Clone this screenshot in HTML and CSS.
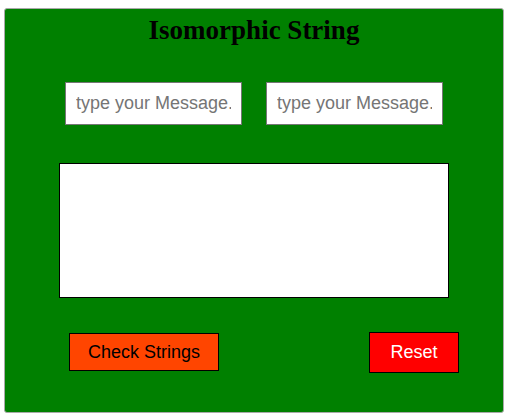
FILE: index.html
```html
<!DOCTYPE html>
<html>
<head>
<meta charset="utf-8">
<link rel="stylesheet" href="styles.css">
</head>
<body>
<div class="box">
  <h1 class="title">Isomorphic String</h1>
  <div class="inputs">
    <input class="field" type="text" placeholder="type your Message.">
    <input class="field" type="text" placeholder="type your Message.">
  </div>
  <div class="output"></div>
  <div class="buttons">
    <button class="btn check">Check Strings</button>
    <button class="btn reset">Reset</button>
  </div>
</div>
</body>
</html>
```
FILE: styles.css
```css
body {
  margin: 8px 0 0 4px;
  font-family: "Liberation Serif", serif;
  background: #fff;
}
.box {
  box-sizing: border-box;
  width: 500px;
  height: 405px;
  background: #008000;
  border: 1px solid #a9a9a9;
  border-radius: 3px;
  display: flex;
  flex-direction: column;
  align-items: center;
}
.title {
  margin: 6px 0 0 0;
  font-size: 27px;
  line-height: 30px;
  font-weight: bold;
  color: #000;
}
.inputs {
  display: flex;
  gap: 24px;
  margin-top: 37px;
}
.field {
  box-sizing: border-box;
  width: 177px;
  height: 43px;
  margin: 0;
  padding: 0 10px;
  border: 1px solid #767676;
  background: #fff;
  font-family: "Liberation Sans", sans-serif;
  font-size: 18px;
  color: #000;
  outline: none;
}
.field::placeholder {
  color: #757575;
}
.output {
  box-sizing: border-box;
  width: 390px;
  height: 135px;
  margin-top: 38px;
  background: #fff;
  border: 1px solid #000;
}
.buttons {
  align-self: stretch;
  display: flex;
  justify-content: space-between;
  align-items: flex-start;
  padding: 0 44px 0 64px;
  margin-top: 34px;
}
.btn {
  box-sizing: border-box;
  border: 1px solid #000;
  font-family: "Liberation Sans", sans-serif;
  font-size: 18px;
  padding: 0;
  margin: 0;
}
.check {
  width: 150px;
  height: 38px;
  margin-top: 1px;
  background: #ff4500;
  color: #000;
}
.reset {
  width: 90px;
  height: 41px;
  background: #ff0000;
  color: #fff;
}
```
